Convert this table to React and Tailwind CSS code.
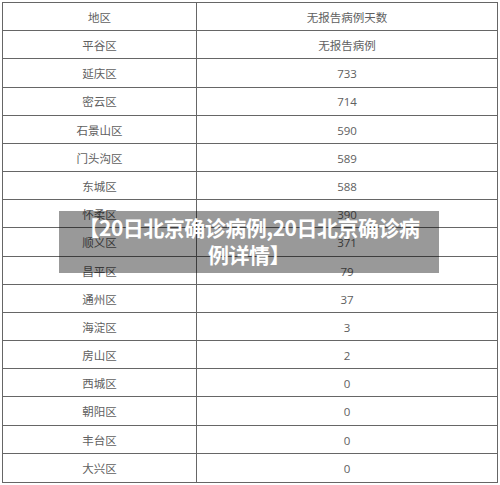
import React from "react";

const rows = [
  ["地区", "无报告病例天数"],
  ["平谷区", "无报告病例"],
  ["延庆区", "733"],
  ["密云区", "714"],
  ["石景山区", "590"],
  ["门头沟区", "589"],
  ["东城区", "588"],
  ["怀柔区", "390"],
  ["顺义区", "371"],
  ["昌平区", "79"],
  ["通州区", "37"],
  ["海淀区", "3"],
  ["房山区", "2"],
  ["西城区", "0"],
  ["朝阳区", "0"],
  ["丰台区", "0"],
  ["大兴区", "0"],
];

export default function App() {
  return (
    <div
      className="relative w-[500px] h-[485px] bg-white overflow-hidden"
      style={{ fontFamily: '"Open Sans", "Noto Sans CJK SC", sans-serif' }}
    >
      <div className="absolute left-0 top-0 w-full h-full pt-[2px] pl-[2px]">
        <div className="w-[496px] h-[481px] border border-[#666666] grid grid-rows-[repeat(17,minmax(0,1fr))]">
          {rows.map(([a, b], i) => (
            <div
              key={i}
              className={`grid grid-cols-[194px_1fr] text-[11.5px] text-[#606060] ${
                i < rows.length - 1 ? "border-b border-[#666666]" : ""
              }`}
            >
              <div className="flex items-center justify-center border-r border-[#666666] pt-[2px]">
                {a}
              </div>
              <div className="flex items-center justify-center pt-[2px]">{b}</div>
            </div>
          ))}
        </div>
      </div>
      <div
        className="absolute left-[59px] top-[211px] w-[380px] h-[62px] bg-black/40 text-white text-center font-bold text-[21px] leading-[27px] pt-[3px] tracking-[-0.5px]"
        style={{ fontFamily: '"Noto Sans CJK SC", sans-serif' }}
      >
        <span>【20日北京确诊病例,20日北京确诊病</span>
        <br />
        <span>例详情】</span>
      </div>
    </div>
  );
}
